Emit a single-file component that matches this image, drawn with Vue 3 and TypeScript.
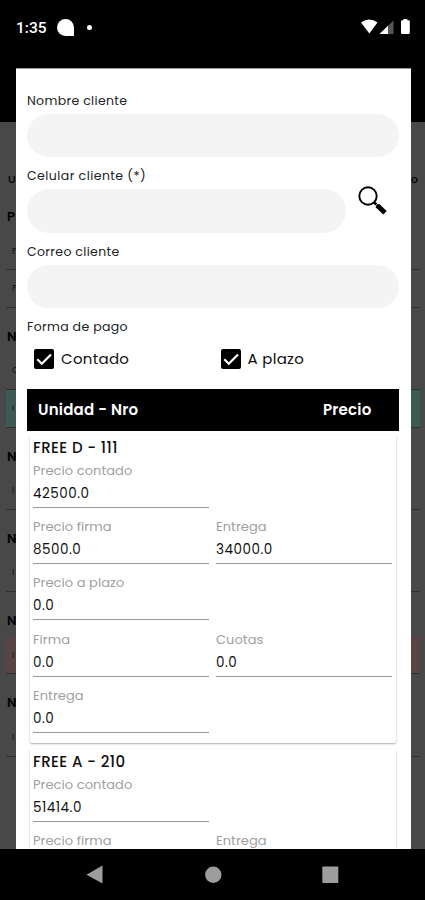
<script setup lang="ts">
interface Field { label: string; value: string }
interface Unit { name: string; rows: Field[][] }
interface Group { title: string; rows: { mark: string; tone: string }[] }

const units: Unit[] = [
  {
    name: 'FREE D - 111',
    rows: [
      [{ label: 'Precio contado', value: '42500.0' }],
      [{ label: 'Precio firma', value: '8500.0' }, { label: 'Entrega', value: '34000.0' }],
      [{ label: 'Precio a plazo', value: '0.0' }],
      [{ label: 'Firma', value: '0.0' }, { label: 'Cuotas', value: '0.0' }],
      [{ label: 'Entrega', value: '0.0' }],
    ],
  },
  {
    name: 'FREE A - 210',
    rows: [
      [{ label: 'Precio contado', value: '51414.0' }],
      [{ label: 'Precio firma', value: '' }, { label: 'Entrega', value: '' }],
    ],
  },
]

const groups: Group[] = [
  { title: 'P', rows: [{ mark: 'F', tone: '' }, { mark: 'F', tone: '' }] },
  { title: 'N', rows: [{ mark: 'C', tone: '' }, { mark: 'I', tone: 'teal' }] },
  { title: 'N', rows: [{ mark: 'I', tone: '' }] },
  { title: 'N', rows: [{ mark: 'I', tone: '' }] },
  { title: 'N', rows: [{ mark: 'I', tone: 'rose' }] },
  { title: 'N', rows: [{ mark: 'I', tone: '' }] },
]
</script>

<template>
  <div class="screen">
    <header class="status">
      <span class="time">1:35</span>
      <svg class="bubble" width="17" height="17" viewBox="0 0 17 17"><path d="M8.500 0A8.500 8.500 0 0 1 17 8.500V17H8.500A8.500 8.500 0 0 1 8.500 0Z" fill="#fff" /></svg>
      <i class="dot"></i>
      <svg class="signals" width="50" height="16" viewBox="0 0 50 16">
        <path d="M0 3.500Q8.200-2.500 16.500 3.500L8.300 14.500Z" fill="#fff" />
        <path d="M32.500 1.500V15H18.500Z" fill="#555" />
        <path d="M27 6.800V15H18.500Z" fill="#fff" />
        <path d="M42.300 1.300V0H46.300V1.300H47.500Q48.800 1.300 48.800 2.600V13.700Q48.800 15 47.500 15H41.300Q40 15 40 13.700V2.600Q40 1.300 41.300 1.300Z" fill="#fff" />
      </svg>
    </header>

    <main class="page">
      <div class="columns"><span>U</span><span>o</span></div>
      <section v-for="(g, i) in groups" :key="i" class="group">
        <h3>{{ g.title }}</h3>
        <div v-for="(r, j) in g.rows" :key="j" class="line" :class="r.tone">{{ r.mark }}</div>
      </section>
    </main>

    <div class="dialog">
      <label class="label">Nombre cliente</label>
      <div class="input"></div>
      <label class="label required">Celular cliente (*)</label>
      <div class="search-row">
        <div class="input"></div>
        <svg class="search" width="30" height="30" viewBox="0 0 30 30">
          <circle cx="10" cy="10" r="8.700" fill="none" stroke="#000" stroke-width="1.900" />
          <path d="M16 16.300L20 20.200" stroke="#000" stroke-width="3" />
          <path d="M19.300 19.500L27 26.800" stroke="#000" stroke-width="5" />
          <path d="M17.200 20L20.400 16.800" stroke="#fff" stroke-width=".8" />
        </svg>
      </div>
      <label class="label">Correo cliente</label>
      <div class="input"></div>
      <label class="label">Forma de pago</label>
      <div class="checks">
        <div v-for="c in ['Contado', 'A plazo']" :key="c" class="check">
          <svg width="20" height="20" viewBox="0 0 20 20"><rect width="20" height="20" rx="2" /><path d="M3.300 10.300L7.800 14.700L17 5.400" fill="none" stroke="#fff" stroke-width="2.200" /></svg>
          <span>{{ c }}</span>
        </div>
      </div>
      <div class="table-head"><span>Unidad - Nro</span><span>Precio</span></div>
      <article v-for="u in units" :key="u.name" class="card">
        <h2>{{ u.name }}</h2>
        <div v-for="(row, i) in u.rows" :key="i" class="fields">
          <div v-for="f in row" :key="f.label" class="field">
            <span class="caption">{{ f.label }}</span>
            <span class="value">{{ f.value }}</span>
          </div>
        </div>
      </article>
    </div>

    <nav class="nav">
      <svg width="425" height="51" viewBox="0 0 425 51" fill="#9d9d9d">
        <path d="M102.500 16.500V34.500L86.500 25.700Z" />
        <circle cx="213.300" cy="25.700" r="8.200" />
        <rect x="322.300" y="17.500" width="16" height="16.500" rx=".8" />
      </svg>
    </nav>
  </div>
</template>

<style>
body { margin: 0; background: #000; }
</style>

<style scoped>
* { box-sizing: border-box; }
.screen { position: relative; width: 425px; height: 900px; overflow: hidden; background: #484848; color: #111; font-family: Poppins, Inter, "Open Sans", sans-serif; display: flex; flex-direction: column; }
.status { height: 122px; flex: none; background: #000; display: flex; align-items: flex-start; padding: 19px 14px 0 16px; }
.time { font: 500 15.500px/18px Roboto, sans-serif; color: #fff; width: 41px; }
.bubble { display: block; }
.dot { width: 5px; height: 5px; border-radius: 50%; background: #fff; margin: 6px 0 0 13px; }
.signals { margin-left: auto; }
.page { flex: 1; padding: 48px 5px 0 6px; }
.columns { height: 18px; display: flex; justify-content: space-between; padding: 0 2px; font-size: 11px; line-height: 18px; font-weight: 500; color: #000; }
.group h3 { margin: 0; height: 44.500px; padding: 19px 0 0 1px; font-size: 13px; line-height: 20px; font-weight: 600; color: #000; }
.line { height: 37.700px; border-bottom: 1px solid #303030; padding-left: 6px; font-size: 9px; line-height: 37px; color: #111; }
.teal { background: #3b5a53; }
.rose { background: #584444; }
.dialog { position: absolute; left: 16px; top: 68px; width: 394.500px; height: 781px; background: #fff; overflow: hidden; padding: 12.500px 11.500px 0 11px; border-top: 1px solid #999; }
.label { display: block; height: 32px; padding-top: 9px; font-size: 12.500px; line-height: 20px; letter-spacing: .33px; color: #222; white-space: nowrap; }
.required { letter-spacing: .45px; }
.input { height: 43.500px; border-radius: 22px; background: #f4f4f4; }
.search-row { display: flex; }
.search-row .input { width: 318.500px; }
.search { margin: -3px 0 0 12px; }
.checks { display: flex; padding: 9px 0 0 7px; height: 48.500px; }
.check { display: flex; flex: none; width: 186.500px; gap: 7px; font-size: 15px; line-height: 19px; letter-spacing: .3px; color: #111; white-space: nowrap; }
.table-head { height: 42.500px; background: #000; color: #fff; display: flex; justify-content: space-between; padding: 0 27.500px 0 11px; font-size: 15px; line-height: 41px; font-weight: 600; letter-spacing: .22px; }
.card { height: 308px; margin: 3.500px 3.500px 6.300px 3px; padding: 3px 3px 0; border-radius: 2px; background: #fff; box-shadow: 0 1px 2px #0005; }
h2 { margin: 0; height: 20px; font-size: 15px; line-height: 20px; font-weight: 500; letter-spacing: .42px; white-space: nowrap; }
.fields { display: grid; grid-template-columns: 176px 176px; column-gap: 7px; height: 56.400px; }
.field { height: 50px; border-bottom: 1.500px solid #999; }
.caption { display: block; height: 25px; padding-top: 3px; font-size: 13px; line-height: 20px; letter-spacing: .06px; color: #a0a0a0; white-space: nowrap; }
.value { display: block; font-size: 13.500px; line-height: 22px; letter-spacing: .5px; color: #111; }
.nav { position: absolute; left: 0; bottom: 0; width: 425px; height: 51px; background: #000; }
.nav svg { display: block; }
</style>
